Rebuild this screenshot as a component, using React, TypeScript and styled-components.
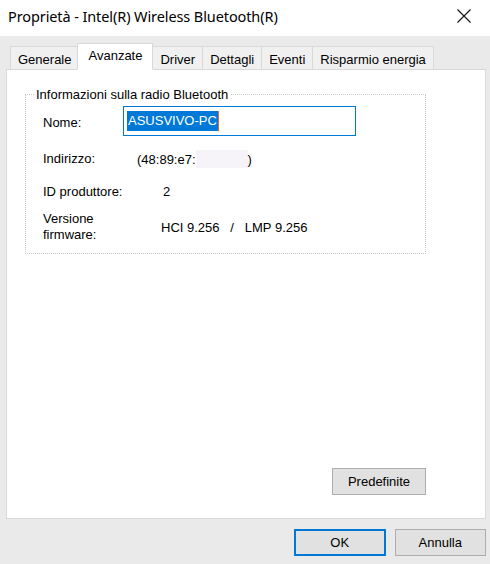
import React, { FC } from 'react';
import styled, { createGlobalStyle } from 'styled-components';

const GlobalStyle = createGlobalStyle`
  html, body {
    margin: 0;
    padding: 0;
  }
  body {
    font-family: 'Liberation Sans', Arial, sans-serif;
    font-size: 13px;
    color: #000;
  }
`;

const tabs = ['Generale', 'Avanzate', 'Driver', 'Dettagli', 'Eventi', 'Risparmio energia'];

const CloseIcon: FC = () => (
  <svg width="16" height="16" viewBox="0 0 16 16" fill="none">
    <path d="M1.5 1.5L14.5 14.5M14.5 1.5L1.5 14.5" stroke="#111" strokeWidth="1.1" />
  </svg>
);

export default function App() {
  return (
    <>
      <GlobalStyle />
      <Dialog>
        <TitleBar>
          <Title>Proprietà - Intel(R) Wireless Bluetooth(R)</Title>
          <CloseButton>
            <CloseIcon />
          </CloseButton>
        </TitleBar>

        <Body>
          <TabStrip>
            {tabs.map((tab) => (
              <Tab key={tab} active={tab === 'Avanzate'}>
                {tab}
              </Tab>
            ))}
          </TabStrip>

          <Panel>
            <GroupBox>
              <Legend>Informazioni sulla radio Bluetooth</Legend>

              <Row height={40}>
                <Label>Nome:</Label>
                <NameInput>
                  <Selection>ASUSVIVO-PC</Selection>
                  <Caret />
                </NameInput>
              </Row>

              <Row height={32}>
                <Label>Indirizzo:</Label>
                <Value offset={94}>
                  (48:89:e7:<Blur />)
                </Value>
              </Row>

              <Row height={33}>
                <Label>ID produttore:</Label>
                <Value offset={120}>2</Value>
              </Row>

              <Row height={38}>
                <Label>
                  Versione
                  <br />
                  firmware:
                </Label>
                <Value offset={118}>HCI 9.256&nbsp;&nbsp;&nbsp;/&nbsp;&nbsp;&nbsp;LMP 9.256</Value>
              </Row>
            </GroupBox>

            <PanelFooter>
              <Button>Predefinite</Button>
            </PanelFooter>
          </Panel>

          <Footer>
            <Button primary wide>
              OK
            </Button>
            <Button wide>Annulla</Button>
          </Footer>
        </Body>
      </Dialog>
    </>
  );
}

const Dialog = styled.div`
  width: 490px;
  height: 564px;
  display: flex;
  flex-direction: column;
  overflow: hidden;
`;

const TitleBar = styled.div`
  height: 36px;
  background: #fff;
  display: flex;
  align-items: flex-start;
  justify-content: space-between;
  padding-left: 8px;
`;

const Title = styled.span`
  font-family: 'Noto Sans', 'Open Sans', sans-serif;
  font-size: 14.5px;
  letter-spacing: -0.1px;
  line-height: 20px;
  margin-top: 6px;
  color: #000;
`;

const CloseButton = styled.div`
  width: 46px;
  height: 32px;
  display: flex;
  align-items: center;
  justify-content: center;
  margin-right: 3px;
`;

const Body = styled.div`
  flex: 1;
  background: #eaeaea;
  display: flex;
  flex-direction: column;
  padding: 7px 4px 0 6px;
`;

const TabStrip = styled.div`
  display: flex;
  align-items: flex-end;
  padding-left: 4px;
  height: 27px;
  position: relative;
  z-index: 1;
`;

const Tab = styled.div<{ active?: boolean }>`
  height: ${(p) => (p.active ? 27 : 24)}px;
  padding: ${(p) => (p.active ? '3px 10px 0 10px' : '4px 7px 0 7px')};
  margin: ${(p) => (p.active ? '0 -1px 0 -1px' : '0')};
  box-sizing: border-box;
  background: ${(p) => (p.active ? '#fff' : '#f0f0f0')};
  border: 1px solid #d9d9d9;
  border-bottom: ${(p) => (p.active ? '1px solid #fff' : '1px solid #d9d9d9')};
  border-right: ${(p) => (p.active ? '1px solid #d9d9d9' : 'none')};
  font-size: 13px;
  line-height: 17px;
  white-space: nowrap;
  position: relative;
  z-index: ${(p) => (p.active ? 2 : 1)};

  &:last-child {
    border-right: 1px solid #d9d9d9;
  }
`;

const Panel = styled.div`
  height: 450px;
  margin-top: -1px;
  background: #fff;
  border: 1px solid #d9d9d9;
  box-sizing: border-box;
  display: flex;
  flex-direction: column;
  padding: 0 0 0 18px;
`;

const GroupBox = styled.fieldset`
  width: 401px;
  box-sizing: border-box;
  margin: 17px 0 0 0;
  padding: 1px 0 7px 17px;
  border: 1px dotted #c8c8c8;
  min-width: 0;
`;

const Legend = styled.legend`
  padding: 0 2px 0 1px;
  margin-left: -8px;
  font-size: 13px;
`;

const Row = styled.div<{ height: number }>`
  display: flex;
  align-items: center;
  height: ${(p) => p.height}px;
`;

const Label = styled.div`
  width: 80px;
  flex-shrink: 0;
  line-height: 16px;
  font-size: 13px;
`;

const Value = styled.div<{ offset: number }>`
  margin-left: ${(p) => p.offset - 80}px;
  display: flex;
  align-items: center;
  white-space: pre;
  font-size: 13px;
`;

const NameInput = styled.div`
  width: 233px;
  height: 30px;
  box-sizing: border-box;
  border: 1px solid #0078d7;
  display: flex;
  align-items: center;
  padding-left: 3px;
  margin-top: -4px;
`;

const Selection = styled.span`
  background: #0078d7;
  color: #fff;
  font-size: 13px;
  line-height: 20px;
  padding: 0 1px;
`;

const Caret = styled.span`
  width: 1px;
  height: 20px;
  background: #e07020;
`;

const Blur = styled.span`
  display: inline-block;
  width: 52px;
  height: 18px;
  background: #f6f4f8;
`;

const PanelFooter = styled.div`
  flex: 1;
  display: flex;
  align-items: flex-end;
  justify-content: flex-end;
  padding: 0 59px 23px 0;
`;

const Button = styled.div<{ primary?: boolean; wide?: boolean }>`
  width: ${(p) => (p.wide ? 92 : 94)}px;
  height: 27px;
  box-sizing: border-box;
  background: #e1e1e1;
  border: 1px solid ${(p) => (p.primary ? '#0078d7' : '#adadad')};
  box-shadow: ${(p) => (p.primary ? 'inset 0 0 0 1px #0078d7' : 'none')};
  display: flex;
  align-items: center;
  justify-content: center;
  font-size: 13px;
`;

const Footer = styled.div`
  display: flex;
  gap: 9px;
  padding: 10px 0 0 288px;
`;
